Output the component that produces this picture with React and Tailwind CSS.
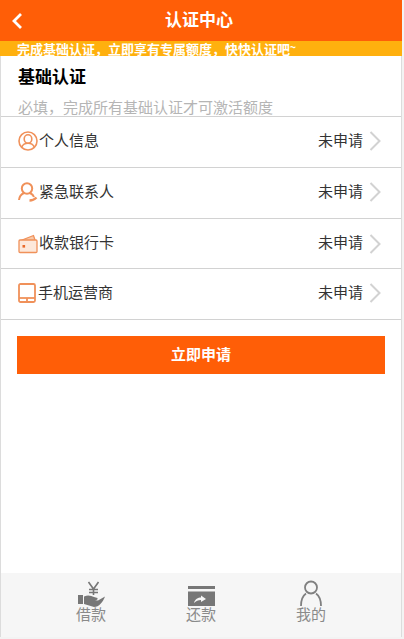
function Chevron() {
  return (
    <svg width="12" height="20" viewBox="0 0 12 20" fill="none" className="ml-[6px] mr-[20px]">
      <path d="M1.5 1 L10.5 10 L1.5 19" stroke="#d2d2d2" strokeWidth="2" />
    </svg>
  );
}
const c = "#f0915a";
const IconPerson = () => (
  <svg width="20" height="20" viewBox="0 0 20 20" fill="none" stroke={c} strokeWidth="1.6">
    <circle cx="10" cy="10" r="9" />
    <ellipse cx="10" cy="8" rx="3.8" ry="4.2" />
    <path d="M3.8 16 C5 13 7.5 12.2 10 12.2 C12.5 12.2 15 13 16.2 16" />
  </svg>
);
const IconContact = () => (
  <svg width="20" height="20" viewBox="0 0 20 20" fill="none" stroke={c} strokeWidth="2">
    <circle cx="9" cy="6.5" r="5.2" />
    <path d="M1 18 C1.5 14 3.5 12 6 11" />
    <path d="M12 11 C14 12 15.5 13.5 16 15" />
    <path d="M11.5 18.5 C14 18.5 16 18 18.5 15.5" strokeWidth="2.4" />
  </svg>
);
const IconCard = () => (
  <svg width="20" height="20" viewBox="0 0 20 20" fill="none" stroke={c} strokeWidth="1.3">
    <path d="M1.5 7 L15.5 1.5 L17 6" fill="#f8c9a9" />
    <rect x="1" y="6" width="18" height="12.5" rx="1" fill="#fde8da" />
    <rect x="4.5" y="11" width="2.6" height="2.6" fill="#ea6a2a" stroke="none" />
  </svg>
);
const IconTablet = () => (
  <svg width="18" height="20" viewBox="0 0 18 20" fill="none" stroke={c} strokeWidth="1.8">
    <rect x="1" y="1" width="16" height="18" rx="1.5" />
    <path d="M1 15 H17" />
    <path d="M9 15 V19" />
  </svg>
);
function Row({ icon, label, gap, h = "h-[51px]", pb = "pb-[2px]" }) {
  return (
    <div className={`flex items-center ${h} ${pb} border-b border-[#d2d2d2] pl-[17px]`}>
      <span className={`flex items-center ${gap}`}>{icon}</span>
      <span className="text-[15px] text-[#333]">{label}</span>
      <span className="ml-auto text-[15px] text-[#333]">未申请</span>
      <Chevron />
    </div>
  );
}
export default function App() {
  return (
    <div className="w-[404px] h-[639px] bg-[#f3f3f3] overflow-hidden" style={{ fontFamily: '"Liberation Sans","Noto Sans CJK SC",sans-serif' }}>
      <div className="w-[402px] h-[637px] bg-white border-x border-[#dcdcdc] flex flex-col">
        <div className="h-[41px] -mx-px bg-[#ff5e07] flex items-center relative justify-center pr-[4px]">
          <svg width="12" height="18" viewBox="0 0 12 18" fill="none" className="absolute left-[11px] top-[12px]">
            <path d="M10 2 L3 9 L10 16" stroke="#fff" strokeWidth="2.8" />
          </svg>
          <span className="text-[17px] font-bold text-white">认证中心</span>
        </div>
        <div className="h-[15px] -mx-px bg-[#ffb00e] pl-[17px] text-[13px] font-bold text-white leading-[13px] whitespace-nowrap">
          完成基础认证，立即享有专属额度，快快认证吧<span className="text-[10px] align-[3px]">~</span>
        </div>
        <div className="pl-[17px] h-[61px] border-b border-[#d2d2d2]">
          <div className="text-[17px] font-bold text-black leading-[20px] pt-[12px] h-[32px]">基础认证</div>
          <div className="text-[15px] text-[#b5b5b5] leading-[18px] mt-[11px] whitespace-nowrap">必填，完成所有基础认证才可激活额度</div>
        </div>
        <Row icon={<IconPerson />} label="个人信息" gap="mr-[1px]" />
        <Row icon={<IconContact />} label="紧急联系人" gap="mr-[1px]" />
        <Row icon={<IconCard />} label="收款银行卡" gap="mr-[1px]" h="h-[50px]" pb="pb-0" />
        <Row icon={<IconTablet />} label="手机运营商" gap="mr-[2px]" />
        <div className="mx-[16px] mt-[16px] h-[38px] w-[368px] bg-[#ff5e07] flex items-center justify-center text-[15px] font-bold text-white">
          立即申请
        </div>
        <div className="mt-auto h-[64px] bg-[#f6f6f6] flex text-[15px] text-[#8a8a8a]">
          <div className="w-[180px] flex flex-col items-center pt-[8px]">
            <svg width="27" height="26" viewBox="0 0 27 26" fill="#777">
              <path d="M10.5 1 L15.5 8 L20.5 1 M15.5 8 V14 M11 8.5 H20 M11 11.5 H20" fill="none" stroke="#777" strokeWidth="1.6" />
              <rect x="0" y="14" width="5" height="9" />
              <path d="M6 15.5 C10 13.5 13 14.5 16 16 L19.5 17 C20 19 18 19.5 15 19 L20 19.5 L27 15.5 C25 21 21 26 16 26 L6 23 Z" />
            </svg>
            <span className="leading-[16px]">借款</span>
          </div>
          <div className="w-[40px] flex flex-col items-center pt-[13px]">
            <svg width="27" height="20" viewBox="0 0 27 20" fill="#777" className="shrink-0">
              <rect x="0" y="0" width="27" height="3" />
              <rect x="0" y="5.5" width="27" height="14.5" />
              <path d="M6 17 C7 13 10 11.5 13 11.5 V9.5 L18 13 L13 16 V14 C10 14 8 15 6 17Z" fill="#f6f6f6" />
            </svg>
            <span className="leading-[16px] mt-[1px] whitespace-nowrap">还款</span>
          </div>
          <div className="w-[180px] flex flex-col items-center pt-[7px]">
            <svg width="24" height="26" viewBox="0 0 24 26" fill="none" stroke="#808080" strokeWidth="1.8">
              <circle cx="12" cy="7.5" r="6" />
              <path d="M2 26 C2 20 3.5 16 7 13.5 M17 13.5 C20.5 16 22 20 22 26" />
            </svg>
            <span className="leading-[16px] mt-[1px]">我的</span>
          </div>
        </div>
      </div>
    </div>
  );
}
